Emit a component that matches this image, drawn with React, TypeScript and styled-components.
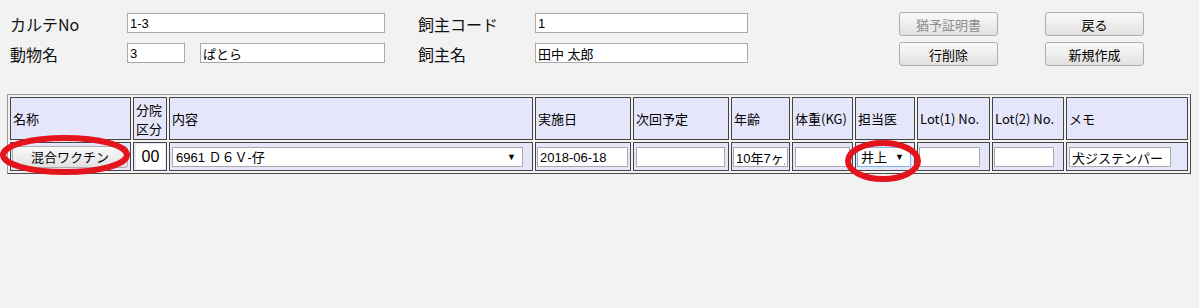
import React from 'react';
import styled, { createGlobalStyle } from 'styled-components';

const GlobalStyle = createGlobalStyle`
  body {
    margin: 0;
    background: #f2f2f2;
    font-family: "Noto Sans CJK JP", sans-serif;
    color: #000;
  }
`;

const Page = styled.div`
  position: relative;
  width: 1199px;
  height: 308px;
  padding-top: 12px;
  box-sizing: border-box;
`;

const FormGrid = styled.div`
  display: grid;
  grid-template-columns: 117px 291px 117px 364px 146px 99px;
  grid-auto-rows: 24px;
  row-gap: 6px;
  padding-left: 10px;
`;

const Label = styled.div`
  font-size: 16px;
  line-height: 24px;
  white-space: nowrap;
  color: #111;
`;

const Field = styled.div`
  display: flex;
  gap: 15px;
  align-items: flex-start;
  padding-top: 1px;
`;

const TextBox = styled.input<{ $w: number; $focus?: boolean }>`
  box-sizing: border-box;
  width: ${p => p.$w}px;
  height: 20px;
  margin: 0;
  padding: 0 2px;
  border: 1px solid ${p => (p.$focus ? '#7eb4ea' : '#a9a9a9')};
  background: #fff;
  font-family: "Liberation Sans", "Noto Sans CJK JP", sans-serif;
  font-size: 13px;
  color: #000;
  outline: none;
  vertical-align: middle;
`;

const Button = styled.button<{ $wide?: boolean }>`
  box-sizing: border-box;
  width: ${p => (p.$wide ? 116 : 99)}px;
  height: ${p => (p.$wide ? 22 : 24)}px;
  margin: 0;
  padding: 0;
  border: 1px solid #adadad;
  border-radius: 3px;
  background: linear-gradient(#fafafa, #e1e1e1);
  font-family: "Noto Sans CJK JP", sans-serif;
  font-size: 13px;
  line-height: 1;
  color: #000;
  vertical-align: middle;
  &:disabled {
    color: #8d8d8d;
  }
`;

const Grid = styled.table`
  margin: 28px 0 0 7px;
  width: 1184px;
  table-layout: fixed;
  border-collapse: separate;
  border-spacing: 2px;
  border: 1px solid #9a9a9a;
  border-right-color: #4a4a4a;
  border-bottom-color: #4a4a4a;
  font-size: 13px;
`;

const Head = styled.th`
  box-sizing: border-box;
  height: 43px;
  padding: 0 2px;
  border: 1px solid #444;
  background: #e6e6fa;
  font-weight: normal;
  text-align: left;
  vertical-align: middle;
  line-height: 19px;
  white-space: nowrap;
  overflow: hidden;
`;

const Cell = styled.td<{ $pad?: number }>`
  box-sizing: border-box;
  height: 29px;
  padding: 0 1px 0 ${p => p.$pad ?? 1}px;
  border: 1px solid #444;
  background: #e6e6fa;
  vertical-align: middle;
  white-space: nowrap;
  overflow: hidden;
`;

const CodeBox = styled.div`
  width: 29px;
  height: 25px;
  margin-left: 1px;
  background: #fff;
  font-family: "Liberation Sans", sans-serif;
  font-size: 16px;
  line-height: 25px;
  text-align: center;
`;

const SelectBox = styled.div<{ $w: number; $focus?: boolean }>`
  box-sizing: border-box;
  display: flex;
  align-items: center;
  justify-content: space-between;
  width: ${p => p.$w}px;
  height: 20px;
  padding: 0 6px 0 3px;
  border: 1px solid ${p => (p.$focus ? '#7eb4ea' : '#a9a9a9')};
  background: #fff;
  font-family: "Liberation Sans", "Noto Sans CJK JP", sans-serif;
  font-size: 13px;
  > i {
    font-style: normal;
    font-size: 9px;
  }
`;

const Marks = styled.svg`
  position: absolute;
  left: 0;
  top: 0;
  pointer-events: none;
`;

const columns = [121, 34, 364, 96, 96, 59, 61, 60, 73, 72, 122];

function App() {
  return (
    <Page>
      <GlobalStyle />
      <FormGrid>
        <Label>カルテNo</Label>
        <Field><TextBox $w={258} defaultValue="1-3" /></Field>
        <Label>飼主コード</Label>
        <Field><TextBox $w={213} defaultValue="1" /></Field>
        <Button disabled>猶予証明書</Button>
        <Button>戻る</Button>

        <Label>動物名</Label>
        <Field>
          <TextBox $w={58} defaultValue="3" />
          <TextBox $w={185} defaultValue="ぱとら" />
        </Field>
        <Label>飼主名</Label>
        <Field><TextBox $w={213} defaultValue="田中 太郎" /></Field>
        <Button>行削除</Button>
        <Button>新規作成</Button>
      </FormGrid>

      <Grid>
        <colgroup>
          {columns.map((w, i) => <col key={i} style={{ width: w }} />)}
        </colgroup>
        <thead>
          <tr>
            <Head>名称</Head>
            <Head>分院<br />区分</Head>
            <Head>内容</Head>
            <Head>実施日</Head>
            <Head>次回予定</Head>
            <Head>年齢</Head>
            <Head>体重(KG)</Head>
            <Head>担当医</Head>
            <Head>Lot(1) No.</Head>
            <Head>Lot(2) No.</Head>
            <Head>メモ</Head>
          </tr>
        </thead>
        <tbody>
          <tr>
            <Cell><Button $wide>混合ワクチン</Button></Cell>
            <Cell><CodeBox>00</CodeBox></Cell>
            <Cell $pad={2}>
              <SelectBox $w={351}><span>6961 Ｄ６Ｖ-仔</span><i>▼</i></SelectBox>
            </Cell>
            <Cell><TextBox $w={91} defaultValue="2018-06-18" /></Cell>
            <Cell $pad={2}><TextBox $w={89} defaultValue="" /></Cell>
            <Cell><TextBox $w={55} defaultValue="10年7ヶ月" /></Cell>
            <Cell $pad={2}><TextBox $w={55} defaultValue="" /></Cell>
            <Cell><SelectBox $w={54} $focus><span>井上</span><i>▼</i></SelectBox></Cell>
            <Cell><TextBox $w={61} defaultValue="" /></Cell>
            <Cell><TextBox $w={60} defaultValue="" /></Cell>
            <Cell $pad={2}><TextBox $w={102} defaultValue="犬ジステンパー：" /></Cell>
          </tr>
        </tbody>
      </Grid>

      <Marks width="1199" height="308">
        <ellipse cx="65" cy="155" rx="62" ry="17" fill="none" stroke="#e3141c" strokeWidth="6" />
        <ellipse cx="883" cy="161" rx="35" ry="18" fill="none" stroke="#e3141c" strokeWidth="6" />
      </Marks>
    </Page>
  );
}

export default App;
